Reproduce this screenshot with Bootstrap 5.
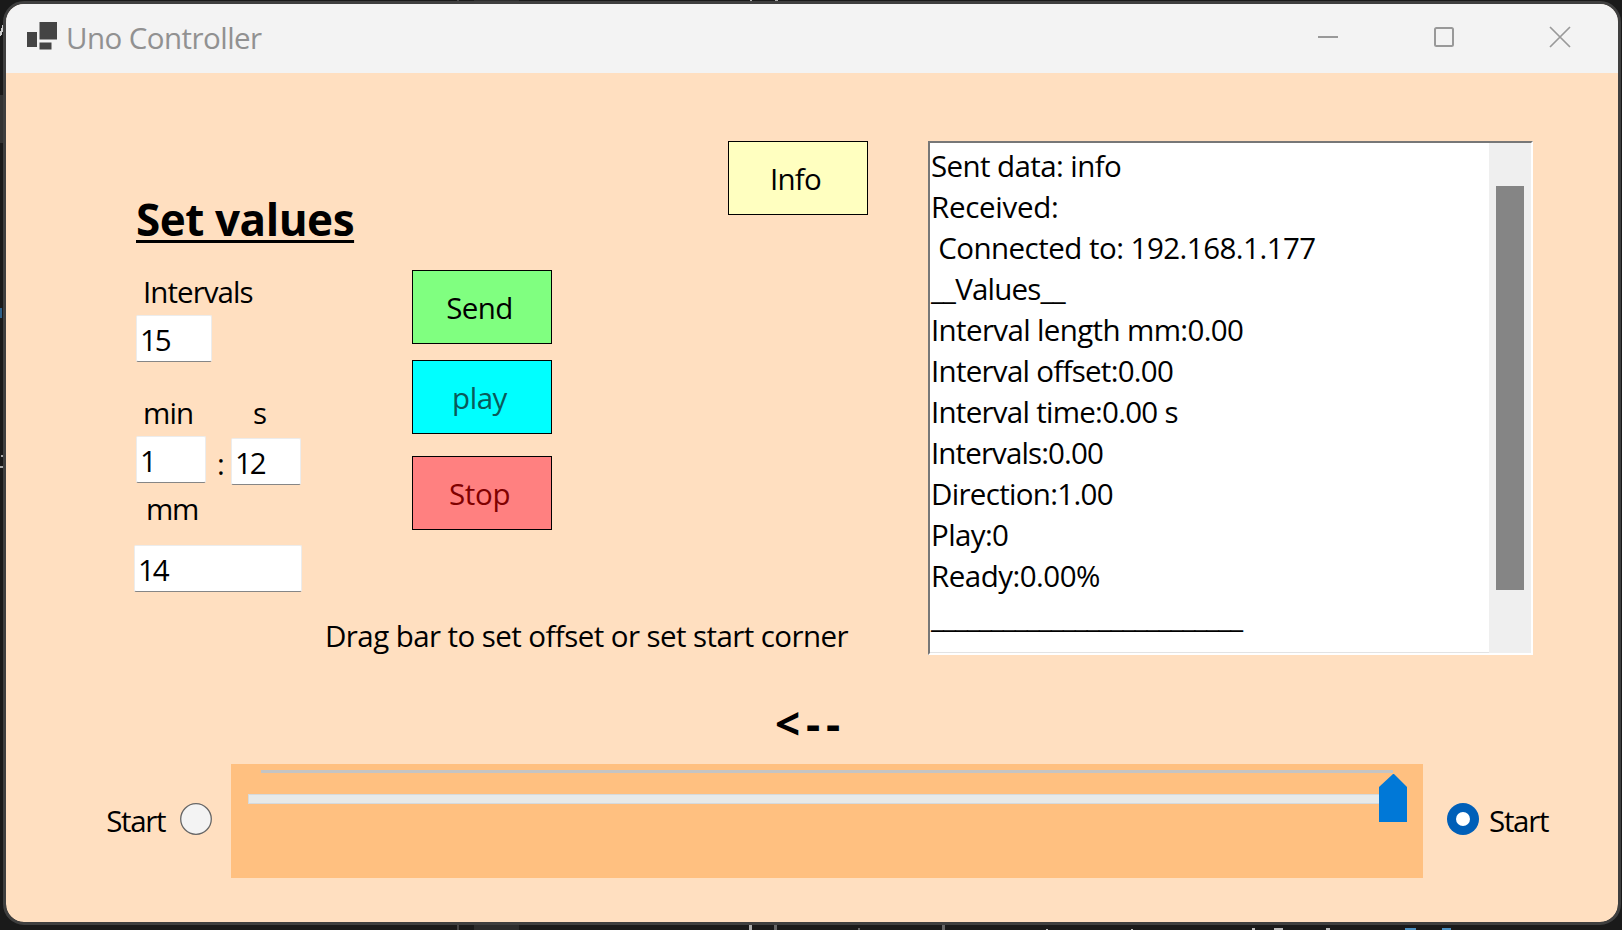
<!DOCTYPE html>
<html lang="en">
<head>
<meta charset="utf-8">
<meta name="viewport" content="width=device-width, initial-scale=1">
<title>Uno Controller</title>
<link href="https://cdn.jsdelivr.net/npm/bootstrap@5.3.0/dist/css/bootstrap.min.css" rel="stylesheet">
<style>
body{background:#1a1a1a;font-family:"Open Sans","Noto Sans",sans-serif;font-size:29.5px;line-height:40px;color:#000;letter-spacing:-.6px;width:1622px;height:930px;overflow:hidden}
.desk{left:0;top:0;z-index:0}
.win{z-index:1;width:1618px;height:924px;margin:1px 0 0 3px;border:3px solid #3f3f3f;border-radius:21px;background:#ffdfc0;overflow:hidden;background-clip:padding-box}
.titlebar{height:69px;background:#f3f3f3;color:#919191;flex:none}
.app-icon{margin:17px 0 0 20px}
.caption{margin:14px 0 0 6px;letter-spacing:-.55px}
.win-btns{margin:22px 47px 0 0;gap:94px}
.client{padding-top:68px}
.left-side{width:922px;flex:none}
.panes{height:451px}
.fields{width:277px;padding:48px 0 0 128px;flex:none}
.heading{font-size:44px;line-height:60px;letter-spacing:-.45px;font-weight:700;margin:0 0 23px 2px;text-decoration:underline;text-decoration-thickness:3px;text-underline-offset:4px;text-decoration-skip-ink:none;white-space:nowrap}
.box{height:47px;border:1px solid #ececec;border-bottom:1px solid #868686;border-radius:2px;background:#fff;padding:2px 0 0 3px;font-size:29.5px;line-height:40px;letter-spacing:-2px;color:#000;font-family:inherit;display:block}
.t-int{letter-spacing:-.94px;margin-left:9px}
.w-int{width:76px;margin:3px 0 0 2px}
.units{margin:31px 0 0 9px;letter-spacing:-.88px}
.u-min{width:110px}
.times{margin:3px 0 0 2px;height:49px;width:170px}
.w-t{width:70px}
.colon{padding:8px 0 0 11px;width:25px}
.t-mm{margin:4px 0 0 12px;letter-spacing:-1.3px}
.w-mm{width:168px;margin-top:16px}
.cmds{width:140px;margin:129px 0 0 129px;flex:none}
.cmd{width:140px;height:74px;border:1px solid #000;border-radius:0;font-size:29.5px;line-height:40px;letter-spacing:-.6px;padding:2px 5px 0 0;color:#000;font-family:inherit;text-align:center;display:block}
.c-send{background:#80ff80}
.c-play{background:#0ff;color:#0a5a5a;margin-top:16px;letter-spacing:-.46px}
.c-stop{background:#ff8080;color:#800000;margin-top:22px;letter-spacing:-.31px}
.c-info{background:#ffffc0;margin-left:176px;flex:none;letter-spacing:-.75px}
.hint{margin:24px 0 0 319px;letter-spacing:-.57px;white-space:nowrap}
.log{width:605px;height:514px;border:2px solid;border-color:#777 #fff #fff #777;background:#fff;flex:none;box-shadow:inset -1px -1px #e3e3e3}
.lines{width:559px;padding:2px 0 0 1px;line-height:41px;white-space:pre;overflow:hidden}
.sbar{width:42px;background:#efefef;padding:43px 0 0 7px}
.thumb{width:28px;height:404px;background:#858585}
.arrow{font-size:44px;line-height:60px;font-weight:700;letter-spacing:5.8px;margin:37px 0 11px 769px}
.bottom-row{height:114px}
.side-l{width:225px;padding:36px 19px 0 0;letter-spacing:-1.4px}
.side-r{padding:36px 0 0 24px;letter-spacing:-1.3px}
.start-txt{padding-top:1px}
.slider-box{width:1192px;background:#ffc080;flex:none}
</style>
</head>
<body class="position-relative">
<svg class="desk position-absolute" width="1622" height="930" shape-rendering="crispEdges" aria-hidden="true">
<rect x="0" y="95" width="6" height="48" fill="#333"/>
<path d="M0 36L6 18" stroke="#ccc" stroke-width="2"/>
<path d="M457 0h2v1h-2zM457 925h2v5h-2z" fill="#444"/>
<path d="M474 0h45v1h-45zM474 925h45v5h-45z" fill="#2c2c2c"/>
<path d="M749 925h3v5h-3zM750 0h2v1h-2zM775 0h3v1h-3z" fill="#aaa"/>
<path d="M774 925h3v5h-3zM942 925h3v5h-3zM858 928h2v2h-2z" fill="#666"/>
<path d="M1046 929h2v1h-2zM1131 929h2v1h-2zM1252 928h3v2h-3zM1274 928h9v2h-9zM1326 928h4v2h-4z" fill="#bbb"/>
<path d="M1405 928h11v2h-11zM1442 928h9v2h-9z" fill="#4a8fc0"/>
<path d="M0 308h2v10h-2z" fill="#2d5f88"/>
<path d="M1 455h3v2h-3zM3 459h2v6h-2zM0 466h4v2h-4z" fill="#aaa"/>
</svg>
<div class="win position-relative d-flex flex-column">
  <header class="titlebar d-flex align-items-start">
    <svg class="app-icon" width="34" height="30" fill="#444"><rect x="1" y="11" width="10" height="15"/><rect x="13.500" y="1" width="17.500" height="17.500"/><rect x="13.500" y="21.500" width="12" height="7"/></svg>
    <div class="caption">Uno Controller</div>
    <div class="win-btns d-flex ms-auto">
      <svg width="22" height="22" fill="#999"><rect x="1" y="10" width="20" height="2"/></svg>
      <svg width="22" height="22" fill="none" stroke="#999" stroke-width="2"><rect x="2" y="2" width="18" height="18" rx="1.500"/></svg>
      <svg width="22" height="22" fill="none" stroke="#999" stroke-width="1.700"><path d="M1 1L21 21M21 1L1 21"/></svg>
    </div>
  </header>
  <main class="client">
    <div class="d-flex">
      <section class="left-side">
        <div class="panes d-flex">
          <form class="fields">
            <h1 class="heading">Set values</h1>
            <div class="t-int">Intervals</div>
            <input class="box w-int" value="15" aria-label="Intervals">
            <div class="units d-flex"><div class="u-min">min</div><div>s</div></div>
            <div class="times d-flex">
              <input class="box w-t" value="1" aria-label="Minutes">
              <div class="colon flex-shrink-0">:</div>
              <input class="box w-t align-self-end" value="12" aria-label="Seconds">
            </div>
            <div class="t-mm">mm</div>
            <input class="box w-mm" value="14" aria-label="Millimetres">
          </form>
          <div class="cmds">
            <button class="cmd c-send">Send</button>
            <button class="cmd c-play">play</button>
            <button class="cmd c-stop">Stop</button>
          </div>
          <button class="cmd c-info">Info</button>
        </div>
        <div class="hint">Drag bar to set offset or set start corner</div>
      </section>
      <section class="log d-flex">
        <div class="lines"><div style="letter-spacing:-.588px">Sent data: info</div><div style="letter-spacing:-.283px">Received:</div><div style="letter-spacing:-.52px"> Connected to: 192.168.1.177</div><div style="letter-spacing:-.8px">__Values__</div><div style="letter-spacing:-.634px">Interval length mm:0.00</div><div style="letter-spacing:-.72px">Interval offset:0.00</div><div style="letter-spacing:-.73px">Interval time:0.00 s</div><div style="letter-spacing:-.88px">Intervals:0.00</div><div style="letter-spacing:-.68px">Direction:1.00</div><div style="letter-spacing:-.6px">Play:0</div><div style="letter-spacing:-.5px">Ready:0.00%</div><div style="letter-spacing:-.95px">__________________________</div></div>
        <div class="sbar"><div class="thumb"></div></div>
      </section>
    </div>
    <div class="arrow">&lt;--</div>
    <div class="bottom-row d-flex">
      <label class="side-l d-flex justify-content-end align-items-start"><span class="start-txt">Start</span>
        <svg width="32" height="32" style="margin:3px 0 0 15px"><circle cx="16" cy="16" r="15.300" fill="#f3f3f3" stroke="#666" stroke-width="1.300"/></svg></label>
      <div class="slider-box">
        <svg class="d-block" width="1192" height="114"><rect x="30" y="6" width="1132" height="3" fill="#c4c4c4"/><rect x="17.500" y="30.500" width="1148" height="9" fill="#e7eaea" stroke="#d6dadc"/><path d="M1148 58V23l14-13h1l13 13v35z" fill="#0078d7"/></svg>
      </div>
      <label class="side-r d-flex align-items-start">
        <svg width="32" height="32" style="margin:3px 10px 0 0"><circle cx="16" cy="16" r="16" fill="#005fb8"/><circle cx="16" cy="16" r="7" fill="#fff"/></svg><span class="start-txt">Start</span></label>
    </div>
  </main>
</div>
<script src="https://cdn.jsdelivr.net/npm/bootstrap@5.3.0/dist/js/bootstrap.bundle.min.js"></script>
</body>
</html>
